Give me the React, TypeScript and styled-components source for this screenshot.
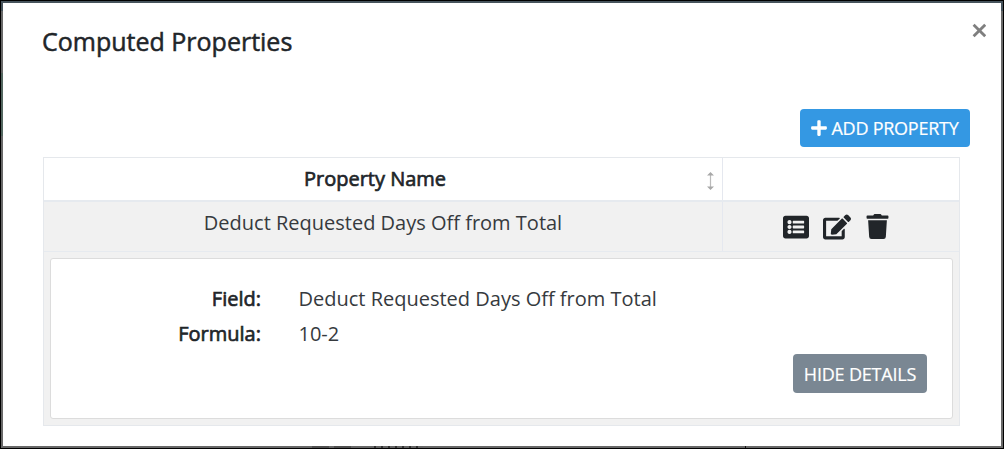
import React from "react";
import styled, { createGlobalStyle } from "styled-components";
import { FaEdit, FaListAlt, FaPlus, FaTrash } from "react-icons/fa";

const GlobalStyle = createGlobalStyle`
  * { box-sizing: border-box; }
  body { margin: 0; background: #000; }
`;

const Backdrop = styled.div`
  width: 1004px;
  height: 449px;
  padding: 2px;
  border: 1px solid #000;
  background:
    linear-gradient(#46535c, #46535c) 0 0 / 100% 10px no-repeat,
    linear-gradient(#4f4f4f, #4f4f4f) 311px 100% / 17px 2px no-repeat,
    linear-gradient(#4f4f4f, #4f4f4f) 333px 100% / 17px 2px no-repeat,
    repeating-linear-gradient(90deg, #333 0 2px, #666 2px 7px) 373px 100% / 49px 2px no-repeat,
    linear-gradient(#111, #111) 744px 100% / 1px 2px no-repeat,
    linear-gradient(#536760, #536760) 0 72px / 2px 63px no-repeat,
    #686868;
  overflow: hidden;
  color: #212529;
  font-family: "Open Sans", sans-serif;
  font-size: 20px;
`;

const Dialog = styled.section`
  width: 998px;
  height: 443px;
  background: #fff;
  display: flex;
  flex-direction: column;
`;

const DialogHeader = styled.header`
  height: 106px;
  padding: 20px 15px 0 39px;
  display: flex;
  justify-content: space-between;
  align-items: flex-start;
`;

const Title = styled.h1`
  margin: 0;
  font-size: 25px;
  line-height: 36px;
  font-weight: 400;
  white-space: nowrap;
  -webkit-text-stroke: 0.5px currentColor;
`;

const CloseButton = styled.button`
  margin: 0;
  padding: 0;
  border: 0;
  background: none;
  width: 14px;
  height: 15px;
  display: flex;
`;

const Toolbar = styled.div`
  height: 48px;
  padding-right: 31px;
  display: flex;
  justify-content: flex-end;
  align-items: flex-start;
`;

const Button = styled.button<{ $tone: "primary" | "muted" }>`
  width: ${(p) => (p.$tone === "primary" ? 170 : 134)}px;
  height: ${(p) => (p.$tone === "primary" ? 38 : 39)}px;
  padding: ${(p) => (p.$tone === "primary" ? "0 1px 0 0" : "0")};
  border: 0;
  border-radius: 4px;
  background: ${(p) => (p.$tone === "primary" ? "#3498e3" : "#7a8793")};
  color: #fff;
  display: flex;
  align-items: center;
  justify-content: center;
  gap: 3px;
  font: 400 18px/24px "Open Sans", sans-serif;
  letter-spacing: ${(p) => (p.$tone === "primary" ? "-0.25px" : "-0.2px")};
  white-space: nowrap;
  -webkit-text-stroke: 0.2px currentColor;
`;

const Table = styled.div`
  width: 917px;
  height: 269px;
  margin-left: 40px;
  border: 1px solid #e5e8ec;
  display: flex;
  flex-direction: column;
`;

const Row = styled.div<{ $head?: boolean }>`
  height: ${(p) => (p.$head ? 44 : 50)}px;
  flex: none;
  display: grid;
  grid-template-columns: 679px 1fr;
  border-bottom: ${(p) => (p.$head ? 2 : 1)}px solid #e6eaef;
  background: ${(p) => (p.$head ? "#fff" : "#f1f1f1")};
`;

const NameCell = styled.div<{ $head?: boolean }>`
  position: relative;
  border-right: 1px solid #e5e8ef;
  padding: ${(p) => (p.$head ? "6px 16px 0 0" : "6px 0 0")};
  line-height: 30px;
  text-align: center;
`;

const Value = styled.span`
  color: #363a3e;
`;

const Strong = styled.span`
  font-weight: 400;
  -webkit-text-stroke: 0.65px currentColor;
`;

const SortIcon = styled.svg`
  position: absolute;
  right: 7px;
  top: 13px;
`;

const Actions = styled.div`
  height: 49px;
  display: flex;
  align-items: center;
  padding: 0 0 0 60px;
  gap: 14px;
`;

const DetailArea = styled.div`
  flex: 1;
  padding: 6px;
  background: #f1f1f1;
`;

const DetailCard = styled.div`
  height: 161px;
  border: 1px solid #dcdcdc;
  border-radius: 3px;
  background: #fff;
  padding: 23px 25px 0 20px;
  display: flex;
  flex-direction: column;
`;

const Field = styled.div`
  height: 35px;
  display: grid;
  grid-template-columns: 190px 1fr;
  column-gap: 37.5px;
  line-height: 34px;
  white-space: nowrap;
`;

const Label = styled(Strong)`
  text-align: right;
`;

const DetailFooter = styled.div`
  display: flex;
  justify-content: flex-end;
  padding-top: 2px;
`;

export default function App() {
  return (
    <>
      <GlobalStyle />
      <Backdrop>
        <Dialog>
          <DialogHeader>
            <Title>Computed Properties</Title>
            <CloseButton aria-label="Close">
              <svg width="14" height="15" viewBox="0 0 14 15">
                <path d="M1.6 1.7L13.2 13.3M13.2 1.7L1.6 13.3" stroke="#7f7f7f" strokeWidth="2.8" />
              </svg>
            </CloseButton>
          </DialogHeader>
          <Toolbar>
            <Button $tone="primary">
              <FaPlus size={18} />
              <span>ADD PROPERTY</span>
            </Button>
          </Toolbar>
          <Table>
            <Row $head>
              <NameCell $head>
                <Strong>Property Name</Strong>
                <SortIcon width="9" height="20" viewBox="0 0 9 20">
                  <path d="M4.5 2V18" stroke="#bbb" strokeWidth="1.2" />
                  <path d="M4.5 1L8 4.5H1ZM4.5 19L8 15.5H1Z" fill="#a8a8a8" />
                </SortIcon>
              </NameCell>
              <div />
            </Row>
            <Row>
              <NameCell>
                <Value>Deduct Requested Days Off from Total</Value>
              </NameCell>
              <Actions>
                <FaListAlt size={26} />
                <FaEdit size={28} />
                <FaTrash size={25} />
              </Actions>
            </Row>
            <DetailArea>
              <DetailCard>
                <Field>
                  <Label>Field:</Label>
                  <Value>Deduct Requested Days Off from Total</Value>
                </Field>
                <Field>
                  <Label>Formula:</Label>
                  <Value>10-2</Value>
                </Field>
                <DetailFooter>
                  <Button $tone="muted">HIDE DETAILS</Button>
                </DetailFooter>
              </DetailCard>
            </DetailArea>
          </Table>
        </Dialog>
      </Backdrop>
    </>
  );
}
